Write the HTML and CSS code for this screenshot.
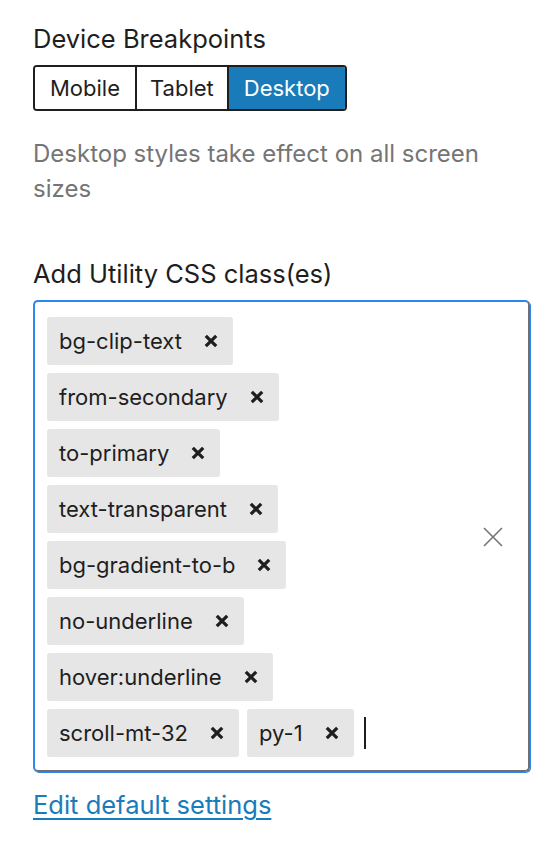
FILE: index.html
```html
<!DOCTYPE html>
<html lang="en">
<head>
<meta charset="utf-8">
<link rel="stylesheet" href="styles.css">
</head>
<body>
<div class="panel">
  <div class="title">Device Breakpoints</div>
  <div class="btn-group">
    <button class="seg">Mobile</button>
    <button class="seg tablet">Tablet</button>
    <button class="seg active">Desktop</button>
  </div>
  <p class="help">Desktop styles take effect on all screen sizes</p>
  <div class="label">Add Utility CSS class(es)</div>
  <div class="select">
    <div class="values">
      <div class="row"><span class="token">bg-clip-text<svg class="rm" viewBox="0 0 14 14"><path d="M1.8 1.8L12.2 12.2M12.2 1.8L1.8 12.2"/></svg></span></div>
      <div class="row"><span class="token">from-secondary<svg class="rm" viewBox="0 0 14 14"><path d="M1.8 1.8L12.2 12.2M12.2 1.8L1.8 12.2"/></svg></span></div>
      <div class="row"><span class="token">to-primary<svg class="rm" viewBox="0 0 14 14"><path d="M1.8 1.8L12.2 12.2M12.2 1.8L1.8 12.2"/></svg></span></div>
      <div class="row"><span class="token">text-transparent<svg class="rm" viewBox="0 0 14 14"><path d="M1.8 1.8L12.2 12.2M12.2 1.8L1.8 12.2"/></svg></span></div>
      <div class="row"><span class="token">bg-gradient-to-b<svg class="rm" viewBox="0 0 14 14"><path d="M1.8 1.8L12.2 12.2M12.2 1.8L1.8 12.2"/></svg></span></div>
      <div class="row"><span class="token">no-underline<svg class="rm" viewBox="0 0 14 14"><path d="M1.8 1.8L12.2 12.2M12.2 1.8L1.8 12.2"/></svg></span></div>
      <div class="row"><span class="token">hover:underline<svg class="rm" viewBox="0 0 14 14"><path d="M1.8 1.8L12.2 12.2M12.2 1.8L1.8 12.2"/></svg></span></div>
      <div class="row"><span class="token">scroll-mt-32<svg class="rm" viewBox="0 0 14 14"><path d="M1.8 1.8L12.2 12.2M12.2 1.8L1.8 12.2"/></svg></span><span class="token">py-1<svg class="rm" viewBox="0 0 14 14"><path d="M1.8 1.8L12.2 12.2M12.2 1.8L1.8 12.2"/></svg></span><span class="caret"></span></div>
    </div>
    <div class="indicator">
      <svg class="clear" viewBox="0 0 20 20"><path d="M1 1L19 19M19 1L1 19"/></svg>
    </div>
  </div>
  <a class="link" href="#">Edit default settings</a>
</div>
</body>
</html>
```
FILE: styles.css
```css
html, body {
  margin: 0;
  padding: 0;
  background: #fff;
}
body {
  font-family: Inter, "Noto Sans", sans-serif;
  color: #1e1e1e;
}
.panel {
  display: flex;
  flex-direction: column;
  align-items: flex-start;
  padding: 23px 0 0 33px;
}
.title {
  font-size: 25.5px;
  line-height: 32px;
  margin-bottom: 10px;
}
.btn-group {
  display: flex;
  border: 2px solid #1e1e1e;
  border-radius: 4px;
  overflow: hidden;
  height: 46px;
  box-sizing: border-box;
}
.seg {
  font-family: inherit;
  font-size: 22px;
  color: #1e1e1e;
  background: #fff;
  border: 0;
  border-right: 2px solid #1e1e1e;
  margin: 0;
  padding: 0 15px;
  height: 42px;
}
.seg.tablet {
  padding: 0 13px;
}
.seg:last-child {
  border-right: 0;
}
.seg.active {
  background: #197bb9;
  color: #fff;
  padding: 0 15px;
}
.help {
  margin: 25px 0 0;
  width: 470px;
  font-size: 24px;
  line-height: 35px;
  color: #757575;
}
.label {
  font-size: 25.5px;
  line-height: 32px;
  margin-top: 52px;
}
.select {
  margin-top: 10px;
  width: 497px;
  box-sizing: border-box;
  display: flex;
  border: 2px solid;
  border-color: #2f86ee #707070 #707070 #2f86ee;
  border-radius: 5px;
  box-shadow: 1px 1px 0 #2f86ee;
  padding: 15px 0 13px 12px;
}
.values {
  flex: 1;
  display: flex;
  flex-direction: column;
  gap: 8px;
}
.row {
  display: flex;
  align-items: center;
  gap: 8px;
}
.token {
  display: inline-flex;
  align-items: center;
  height: 48px;
  padding: 0 15px 0 12px;
  background: #e6e6e6;
  border-radius: 3px;
  font-size: 22px;
  color: #1e1e1e;
  box-sizing: border-box;
}
.rm {
  width: 14px;
  height: 14px;
  margin-left: 22px;
  stroke: #1e1e1e;
  stroke-width: 3.2;
  fill: none;
}
.caret {
  width: 2px;
  height: 32px;
  background: #1e1e1e;
  margin-left: 2px;
}
.indicator {
  display: flex;
  align-items: center;
  padding: 0 25px 0 10px;
}
.clear {
  width: 20px;
  height: 20px;
  stroke: #757575;
  stroke-width: 1.6;
  fill: none;
}
.link {
  margin-top: 17px;
  font-size: 25.5px;
  line-height: 32px;
  color: #1a7bba;
  text-decoration: underline;
  text-underline-offset: 4px;
}
```
